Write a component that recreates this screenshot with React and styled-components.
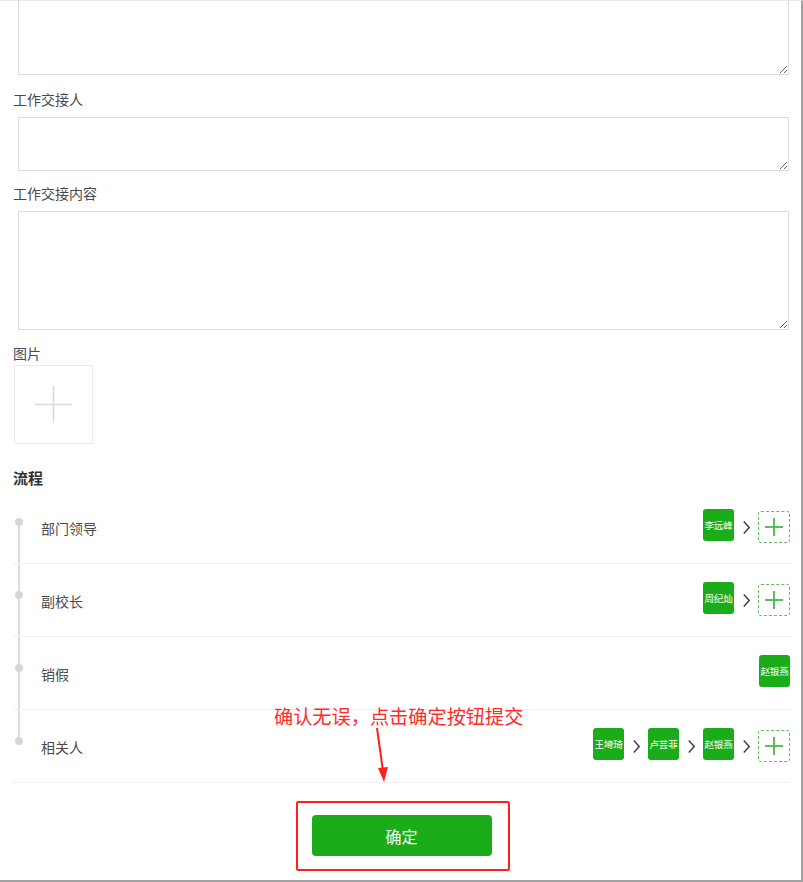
import React from "react";
import styled, { createGlobalStyle } from "styled-components";

const Global = createGlobalStyle`
  html, body { margin: 0; padding: 0; background: #fff; }
  body { font-family: "Noto Sans CJK SC", "Noto Sans", sans-serif; }
  * { box-sizing: border-box; }
`;

const Page = styled.div`
  position: relative;
  width: 803px;
  height: 882px;
  border-top: 1px solid #e8e8e8;
  border-right: 2px solid #a3a3a3;
  border-bottom: 2px solid #a3a3a3;
  overflow: hidden;
  padding: 0 11px 0 13px;
  display: flex;
  flex-direction: column;
`;

const TextArea = styled.textarea`
  display: block;
  margin: 0 1px 0 5px;
  width: calc(100% - 6px);
  height: ${(p) => p.$h}px;
  border: 1px solid #dcdcdc;
  border-top: ${(p) => (p.$noTop ? "none" : "1px solid #dcdcdc")};
  background: #fff;
  resize: vertical;
  font-family: inherit;
  outline: none;
`;

const Label = styled.div`
  font-size: 14px;
  line-height: 20px;
  color: #4a4a4a;
  margin-top: ${(p) => p.$mt}px;
  margin-bottom: ${(p) => p.$mb}px;
`;

const Upload = styled.div`
  width: 79px;
  height: 79px;
  margin-left: 1px;
  border: 1px solid #ececec;
  display: flex;
  align-items: center;
  justify-content: center;
`;

const SectionTitle = styled.div`
  margin-top: 24px;
  font-size: 15px;
  line-height: 20px;
  font-weight: 700;
  color: #333;
`;

const Flow = styled.div`
  position: relative;
  margin-top: 3px;
  &::before {
    content: "";
    position: absolute;
    left: 5px;
    top: 31px;
    bottom: 41px;
    width: 2px;
    background: #dcdcdc;
  }
`;

const Row = styled.div`
  position: relative;
  height: 73px;
  border-bottom: 1px solid #efefef;
  padding-left: 28px;
  display: flex;
  align-items: center;
  &::before {
    content: "";
    position: absolute;
    left: 2px;
    top: 27px;
    width: 8px;
    height: 8px;
    border-radius: 50%;
    background: #d6d6d6;
  }
`;

const RowName = styled.div`
  flex: 1;
  font-size: 14px;
  color: #4a4a4a;
  padding-top: 2px;
`;

const People = styled.div`
  display: flex;
  align-items: center;
  gap: 8px;
`;

const Avatar = styled.div`
  width: 31px;
  height: 32px;
  border-radius: 3px;
  background: #1aad19;
  color: #fff;
  font-size: 9.5px;
  display: flex;
  align-items: center;
  justify-content: center;
  white-space: nowrap;
  letter-spacing: -0.2px;
  margin-top: -4px;
`;

const AddBox = styled.div`
  width: 32px;
  height: 32px;
  border: 1px dashed #5fc05b;
  border-radius: 3px;
  display: flex;
  align-items: center;
  justify-content: center;
`;

const Chevron = () => (
  <svg width="7" height="15" viewBox="0 0 7 15" style={{ marginLeft: 1 }}>
    <polyline points="0.8,1.5 6.2,7.5 0.8,13.5" fill="none" stroke="#3a3f4b" strokeWidth="1.4" />
  </svg>
);

const Plus = ({ size, color, w }) => (
  <svg width={size} height={size} viewBox={`0 0 ${size} ${size}`}>
    <line x1={size / 2} y1="0" x2={size / 2} y2={size} stroke={color} strokeWidth={w} />
    <line x1="0" y1={size / 2} x2={size} y2={size / 2} stroke={color} strokeWidth={w} />
  </svg>
);

const Footer = styled.div`
  display: flex;
  justify-content: center;
  padding-top: 32px;
`;

const Button = styled.button`
  width: 180px;
  height: 41px;
  border: none;
  border-radius: 4px;
  background: #1aad19;
  color: #fff;
  font-family: inherit;
  font-size: 16px;
`;

const Note = styled.div`
  position: absolute;
  left: 274px;
  top: 703px;
  font-size: 19.2px;
  line-height: 24px;
  color: #ff2b2b;
  white-space: nowrap;
`;

const Arrow = styled.svg`
  position: absolute;
  left: 368px;
  top: 724px;
`;

const Highlight = styled.div`
  position: absolute;
  left: 296px;
  top: 800px;
  width: 214px;
  height: 70px;
  border: 2.5px solid #ff1f1f;
  border-radius: 2px;
`;

const steps = [
  { name: "部门领导", people: ["李远峰"], add: true },
  { name: "副校长", people: ["周纪灿"], add: true },
  { name: "销假", people: ["赵银燕"], add: false },
  { name: "相关人", people: ["王埼琦", "卢芸菲", "赵银燕"], add: true },
];

export default function App() {
  return (
    <>
      <Global />
      <Page>
        <TextArea $h={74} $noTop />
        <Label $mt={14} $mb={8}>工作交接人</Label>
        <TextArea $h={54} />
        <Label $mt={12} $mb={8}>工作交接内容</Label>
        <TextArea $h={119} />
        <Label $mt={13} $mb={2}>图片</Label>
        <Upload>
          <Plus size={37} color="#dadada" w={1.6} />
        </Upload>
        <SectionTitle>流程</SectionTitle>
        <Flow>
          {steps.map((s) => (
            <Row key={s.name}>
              <RowName>{s.name}</RowName>
              <People>
                {s.people.map((p, i) => (
                  <React.Fragment key={p + i}>
                    {i > 0 && <Chevron />}
                    <Avatar>{p}</Avatar>
                  </React.Fragment>
                ))}
                {s.add && (
                  <>
                    <Chevron />
                    <AddBox>
                      <Plus size={18} color="#4cb848" w={1.8} />
                    </AddBox>
                  </>
                )}
              </People>
            </Row>
          ))}
        </Flow>
        <Footer>
          <Button>确定</Button>
        </Footer>
        <Note>确认无误，点击确定按钮提交</Note>
        <Arrow width="24" height="60" viewBox="0 0 24 60">
          <line x1="9" y1="3" x2="15" y2="46" stroke="#ff1f1f" strokeWidth="2" />
          <polygon points="10,43 20,42 16,57" fill="#ff1f1f" />
        </Arrow>
        <Highlight />
      </Page>
    </>
  );
}
